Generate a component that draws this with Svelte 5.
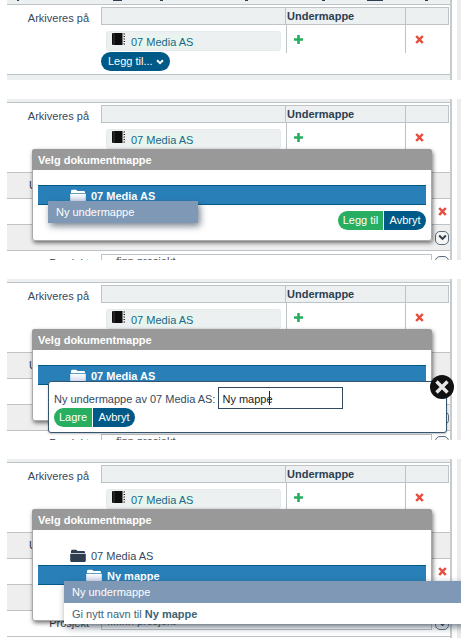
<script>
  const panels = [
    { id: 'a', kind: 'base' },
    { id: 'b', kind: 'menu' },
    { id: 'c', kind: 'form' },
    { id: 'd', kind: 'child' }
  ];
</script>

{#snippet folder(fill, shade)}
  <svg class="folder" viewBox="0 0 16 13" aria-hidden="true">
    <defs>
      <linearGradient id="fold{shade ? 'a' : 'b'}" x1="0" y1="0" x2="0" y2="1">
        <stop offset="0" stop-color={fill} />
        <stop offset="1" stop-color={shade || fill} />
      </linearGradient>
    </defs>
    <path d="M1 2.200C1 1.300 1.600 .7 2.400 .7h3.400c.6 0 .9.3 1.200.8l.3.5h6.300c.8 0 1.400.5 1.400 1.200V3.900H1z" fill={fill} />
    <path d="M.2 4.800h15.600v6.600c0 .9-.6 1.500-1.400 1.500H1.600C.8 12.900.2 12.300.2 11.400z" fill="url(#fold{shade ? 'a' : 'b'})" />
  </svg>
{/snippet}

{#snippet table()}
  <div class="archive">
    <div class="label">Arkiveres på</div>
    <div class="grid">
      <div class="head"></div>
      <div class="head strong">Undermappe</div>
      <div class="head"></div>
      <div class="cell first">
        <div class="chip">
          <svg class="book" viewBox="0 0 13 12" aria-hidden="true">
            <path d="M1 0h9.500v12H1a1 1 0 0 1-1-1V1a1 1 0 0 1 1-1z" fill="#0c0c0c" />
            <path d="M2 0v12" stroke="#555" stroke-width=".7" />
            <path d="M11.500 1h1.500M11.500 3.500h1.500M11.500 6h1.500M11.500 8.500h1.500M11.500 11h1.500" stroke="#222" stroke-width="1" />
          </svg>
          <span>07 Media AS</span>
        </div>
      </div>
      <div class="cell mid">
        <svg class="plus" viewBox="0 0 9 9" aria-hidden="true"><path d="M3.200 0h2.600v3.200H9v2.600H5.800V9H3.200V5.800H0V3.200h3.200z" fill="#27ae60" /></svg>
      </div>
      <div class="cell end">
        <svg class="cross" viewBox="0 0 9 9" aria-hidden="true"><path d="M1.200 1 7.800 8M7.800 1 1.200 8" stroke="#e74c3c" stroke-width="2.500" /></svg>
      </div>
    </div>
  </div>
{/snippet}

{#snippet backdrop()}
  <div class="rows">
    <div class="row shade"><span class="stub">U</span></div>
    <div class="row">
      <svg class="cross side" viewBox="0 0 9 9" aria-hidden="true"><path d="M1.200 1 7.800 8M7.800 1 1.200 8" stroke="#e74c3c" stroke-width="2.500" /></svg>
    </div>
    <div class="row shade">
      <span class="round"><svg viewBox="0 0 10 7" aria-hidden="true"><path d="M1.300 1.300 5 5l3.700-3.700" fill="none" stroke="#2c3e50" stroke-width="2.200" /></svg></span>
    </div>
    <div class="row project">
      <span class="plabel">Prosjekt</span>
      <span class="pinput">...finn prosjekt</span>
      <span class="round low"><svg viewBox="0 0 10 7" aria-hidden="true"><path d="M1.300 1.300 5 5l3.700-3.700" fill="none" stroke="#2c3e50" stroke-width="2.200" /></svg></span>
    </div>
  </div>
{/snippet}

<main class="sheet">
  {#each panels as p (p.id)}
    <section class="panel {p.kind}">
      <div class="page">
        {#if p.kind === 'base'}
          <div class="crumbs"></div>
        {/if}
        <div class="rule"></div>
        {@render table()}
        {#if p.kind === 'base'}
          <button class="pill blue add">Legg til... <svg viewBox="0 0 10 7" aria-hidden="true"><path d="M1.300 1.300 5 5l3.700-3.700" fill="none" stroke="#fff" stroke-width="2.500" /></svg></button>
          <div class="closing"></div>
        {:else}
          <div class="spacer"></div>
          {@render backdrop()}
        {/if}
      </div>
      <div class="scrollbar"></div>

      {#if p.kind !== 'base'}
        <div class="modal">
          <div class="title">Velg dokumentmappe</div>
          <div class="tree">
            {#if p.kind === 'child'}
              <div class="node">{@render folder('#2c3e50')}<span>07 Media AS</span></div>
              <div class="node selected nested">{@render folder('#fff', '#cfd6ee')}<b>Ny mappe</b></div>
            {:else}
              <div class="node selected">{@render folder('#fff', p.kind === 'menu' ? '#cfd6ee' : '#fff')}<b>07 Media AS</b></div>
            {/if}
          </div>
          {#if p.kind !== 'child'}
            <div class="actions">
              <button class="pill green left w45">Legg til</button><button class="pill blue right w42">Avbryt</button>
            </div>
          {/if}
        </div>
      {/if}

      {#if p.kind === 'menu'}
        <div class="ctx small"><div class="item on">Ny undermappe</div></div>
      {/if}

      {#if p.kind === 'form'}
        <div class="pop">
          <div class="line">
            <label for="newname">Ny undermappe av 07 Media AS:</label>
            <input id="newname" value="Ny mappe" />
          </div>
          <div class="popbtns">
            <button class="pill green left w38">Lagre</button><button class="pill blue right w42">Avbryt</button>
          </div>
          <span class="close"><svg viewBox="0 0 24 24" aria-hidden="true"><circle cx="12" cy="12" r="12" fill="#111" /><path d="M6.500 6.500l11 11M17.500 6.500l-11 11" stroke="#e8e8e8" stroke-width="3.400" /></svg></span>
        </div>
      {/if}

      {#if p.kind === 'child'}
        <div class="ctx wide">
          <div class="item on">Ny undermappe</div>
          <div class="item">Gi nytt navn til <b>Ny mappe</b></div>
        </div>
      {/if}
    </section>
  {/each}
</main>

<style>
  :global(body) {
    margin: 0;
    background: #fff;
  }
  .sheet {
    width: 461px;
    height: 638px;
    overflow: hidden;
    font-family: "Liberation Sans", Arial, sans-serif;
    font-size: 11px;
    color: #2c3e50;
  }
  .panel {
    position: relative;
    height: 180px;
    overflow: hidden;
    display: flex;
    align-items: flex-start;
    padding-left: 7px;
    box-sizing: border-box;
  }
  .panel.base {
    height: 99px;
  }
  .panel.child {
    height: 179px;
  }
  .page {
    width: 445px;
    flex: none;
    box-sizing: border-box;
    height: 161px;
    overflow: hidden;
    border-right: 2px solid #c6cbce;
    background: #fff;
  }
  .panel.child .page {
    height: 179px;
  }
  .panel.base .page {
    height: 80px;
  }
  .scrollbar {
    width: 4px;
    height: 161px;
    margin-left: 5px;
    background: #ececec;
    flex: none;
  }
  .panel.base .scrollbar {
    height: 80px;
  }
  .panel.child .scrollbar {
    height: 179px;
  }
  .crumbs {
    height: 1px;
    background:
      linear-gradient(#2c3e50, #2c3e50) no-repeat 10px 0 / 2px 1px,
      linear-gradient(#2c3e50, #2c3e50) no-repeat 106px 0 / 9px 1px,
      linear-gradient(#2c3e50, #2c3e50) no-repeat 153px 0 / 3px 1px,
      linear-gradient(#2c3e50, #2c3e50) no-repeat 238px 0 / 3px 1px,
      linear-gradient(#2c3e50, #2c3e50) no-repeat 315px 0 / 3px 1px,
      linear-gradient(#2c3e50, #2c3e50) no-repeat 360px 0 / 16px 1px,
      linear-gradient(#2c3e50, #2c3e50) no-repeat 418px 0 / 3px 1px,
      #ecf0f1;
  }
  .rule {
    height: 3px;
    background: #ecf0f1;
    border-bottom: 1px solid #bdc3c7;
  }
  .archive {
    display: flex;
    padding-top: 2px;
  }
  .label {
    width: 82px;
    text-align: right;
    padding-top: 4px;
    line-height: 14px;
    color: #34495e;
    flex: none;
  }
  .grid {
    margin-left: 12px;
    width: 348px;
    display: grid;
    grid-template-columns: 185px 120px 43px;
    grid-template-rows: 18px 28px;
  }
  .head {
    background: #ecf0f1;
    border: 1px solid #bdc3c7;
    border-left-width: 0;
    box-sizing: border-box;
    line-height: 17px;
  }
  .head:first-child {
    border-left-width: 1px;
  }
  .strong {
    font-weight: 700;
    color: #2c3e50;
    padding-left: 1px;
  }
  .cell {
    box-sizing: border-box;
    min-width: 0;
  }
  .mid {
    border-left: 1px solid #bdc3c7;
    border-right: 1px solid #bdc3c7;
    padding: 10px 0 0 7px;
  }
  .end {
    padding: 10px 0 0 9px;
  }
  .first {
    padding: 6px 5px 0;
  }
  .chip {
    height: 20px;
    background: #ecf0f1;
    border-radius: 3px;
    display: flex;
    align-items: center;
    gap: 6px;
    padding-left: 5px;
    box-sizing: border-box;
    width: 175px;
    border: 1px solid #e6eaeb;
  }
  .chip span {
    color: #16678a;
    background: #e8f5ee;
    padding-top: 1px;
  }
  .book {
    width: 13px;
    height: 12px;
    margin-top: -4px;
    flex: none;
  }
  .plus,
  .cross {
    width: 9px;
    height: 9px;
    display: block;
    flex: none;
  }
  .pill {
    font: inherit;
    color: #fff;
    border: 0;
    height: 19px;
    padding: 0;
    line-height: 19px;
    text-align: center;
  }
  .w38 {
    width: 38px;
  }
  .w42 {
    width: 42px;
  }
  .w45 {
    width: 45px;
  }
  .blue {
    background: #005a87;
  }
  .green {
    background: #27ae60;
  }
  .left {
    border-radius: 10px 0 0 10px;
    margin-right: 1px;
  }
  .right {
    border-radius: 0 10px 10px 0;
  }
  .add {
    display: flex;
    align-items: center;
    gap: 3px;
    margin: -1px 0 0 94px;
    padding-left: 7px;
    width: 69px;
    border-radius: 10px;
    white-space: nowrap;
  }
  .add svg {
    width: 8px;
    height: 6px;
    flex: none;
  }
  .closing {
    margin-top: 3px;
    height: 5px;
    background: #ecf0f1;
    border-top: 1px solid #bdc3c7;
  }
  .spacer {
    height: 21px;
  }
  .row {
    height: 25px;
    border-top: 1px solid #bdc3c7;
    position: relative;
    display: flex;
    align-items: center;
    justify-content: flex-end;
    padding-right: 1px;
  }
  .shade {
    background: #eeeeee;
  }
  .stub {
    position: absolute;
    left: 22px;
    top: 6px;
  }
  .side {
    margin-right: 2px;
  }
  .round {
    width: 12px;
    height: 12px;
    border: 1px solid #5d6d7e;
    border-radius: 5px;
    display: flex;
    align-items: center;
    justify-content: center;
    background: #f4f6f6;
    flex: none;
  }
  .low {
    margin-top: 2px;
  }
  .round svg {
    width: 9px;
    height: 7px;
  }
  .project {
    height: 27px;
    justify-content: flex-start;
    padding: 3px 0 0;
    align-items: flex-start;
    gap: 3px;
    border-bottom: 1px solid #bdc3c7;
    box-sizing: border-box;
  }
  .plabel {
    width: 82px;
    text-align: right;
    margin-right: 9px;
    line-height: 18px;
    flex: none;
  }
  .pinput {
    width: 331px;
    height: 16px;
    box-sizing: border-box;
    border: 1px solid #bdc3c7;
    padding-left: 5px;
    line-height: 12px;
    color: #555;
    flex: none;
  }
  .modal {
    position: absolute;
    left: 32px;
    top: 50px;
    width: 400px;
    height: 92px;
    background: #fff;
    border-radius: 3px;
    box-shadow: inset 0 0 0 1px #aaa, 1px 2px 4px rgba(0, 0, 0, 0.55);
    overflow: hidden;
  }
  .panel.child .modal {
    height: 112px;
  }
  .title {
    height: 21px;
    background: #999;
    color: #fff;
    font-weight: 700;
    padding-left: 6px;
    line-height: 23px;
    box-sizing: border-box;
  }
  .tree {
    margin: 15px 6px 0;
  }
  .node {
    height: 20px;
    box-sizing: border-box;
    display: flex;
    align-items: center;
    gap: 5px;
    padding-left: 32px;
    color: #34495e;
  }
  .node span,
  .node b {
    padding-top: 2px;
  }
  .selected {
    background: #2980b9;
    border-top: 1px solid #005a87;
    border-bottom: 1px solid #005a87;
    color: #fff;
  }
  .nested {
    padding-left: 48px;
  }
  .folder {
    width: 16px;
    height: 13px;
    flex: none;
  }
  .actions {
    display: flex;
    justify-content: flex-end;
    margin: 6px 6px 0 0;
  }
  .ctx {
    position: absolute;
    background: #fff;
    box-shadow: 2px 3px 7px rgba(44, 62, 80, 0.65);
    color: #3d6375;
  }
  .small {
    left: 48px;
    top: 102px;
    width: 150px;
  }
  .wide {
    left: 64px;
    top: 122px;
    width: 400px;
  }
  .item {
    height: 21.5px;
    line-height: 23px;
    padding-left: 8px;
    overflow: hidden;
  }
  .on {
    background: #7f98b5;
    color: #fff;
  }
  .pop {
    position: absolute;
    left: 48px;
    top: 102px;
    width: 399px;
    height: 52px;
    box-sizing: border-box;
    background: #fff;
    border: 1px solid #34556f;
    border-radius: 3px;
    padding: 5px 5px 0;
    box-shadow: 0 1px 2px rgba(0, 0, 0, 0.25);
  }
  .line {
    display: flex;
    align-items: center;
    gap: 3px;
    height: 21px;
  }
  .line input {
    width: 125px;
    height: 22px;
    box-sizing: border-box;
    border: 1px solid #34495e;
    border-radius: 0;
    padding: 2px 3px 0;
    font: inherit;
    color: #222;
    outline: 0;
    background: linear-gradient(#222, #222) no-repeat 50px 3px / 1px 14px;
  }
  .line label {
    color: #34495e;
    padding-top: 2px;
  }
  .popbtns {
    display: flex;
  }
  .close {
    position: absolute;
    right: -8px;
    top: -7px;
    width: 24px;
    height: 24px;
  }
  .close svg {
    width: 24px;
    height: 24px;
    display: block;
  }
</style>
